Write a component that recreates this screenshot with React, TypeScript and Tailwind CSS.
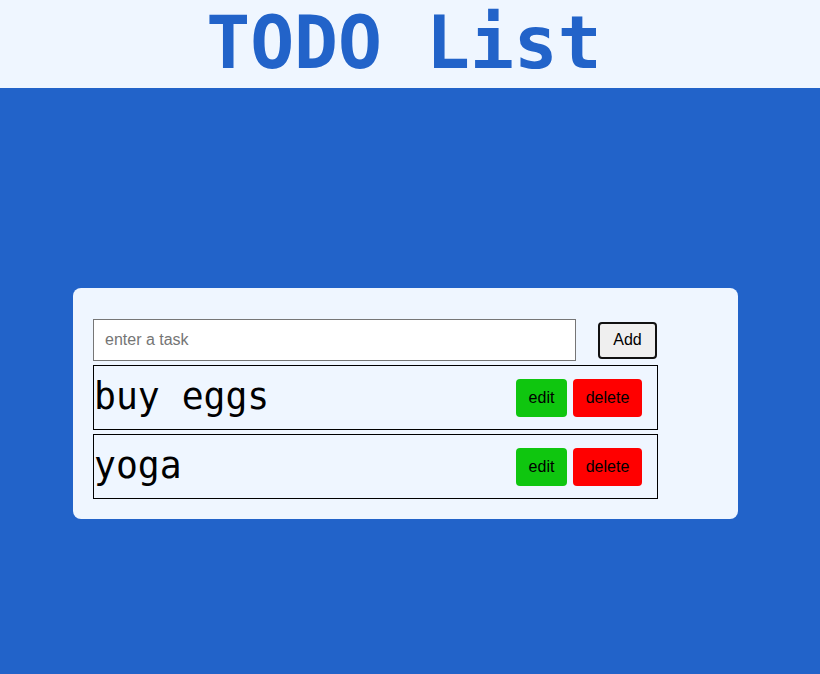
import { useState } from "react";

type Task = { id: number; text: string };

export default function App() {
  const [tasks, setTasks] = useState<Task[]>([
    { id: 1, text: "buy eggs" },
    { id: 2, text: "yoga" },
  ]);
  const [value, setValue] = useState("");

  const addTask = () => {
    if (!value.trim()) return;
    setTasks((prev) => [...prev, { id: Date.now(), text: value }]);
    setValue("");
  };

  return (
    <div className="min-h-[674px] bg-[#2263c9] font-['Liberation_Sans',Arial,sans-serif]">
      <header className="h-[88px] bg-[#eff6ff] flex items-center justify-center">
        <h1 className="font-['DejaVu_Sans_Mono',monospace] font-bold text-[73px] leading-none text-[#2263c9] ml-[-12px] mt-[-4px]">
          TODO List
        </h1>
      </header>

      <main className="pt-[200px] pl-[73px]">
        <div className="w-[665px] rounded-lg bg-[#eff6ff] pl-5 pt-[31px] pb-5">
          <div className="flex items-center w-[565px]">
            <input
              type="text"
              placeholder="enter a task"
              value={value}
              onChange={(e) => setValue(e.target.value)}
              className="w-[483px] h-[42px] border border-[#767676] bg-white pl-[11px] pr-3 text-base text-black placeholder:text-[#757575] outline-none"
            />
            <button
              onClick={addTask}
              className="ml-auto mr-[1px] w-[59px] h-[37px] border-2 border-[#111] rounded bg-[#efefef] text-base text-black"
            >
              Add
            </button>
          </div>

          <ul className="mt-[4px] flex flex-col gap-[4px] w-[565px]">
            {tasks.map((task) => (
              <li
                key={task.id}
                className="h-[65px] border border-black flex items-center pr-[15px]"
              >
                <span className="flex-1 font-['DejaVu_Sans_Mono',monospace] text-[36.4px] leading-none text-black">
                  {task.text}
                </span>
                <button className="w-[51px] h-[38px] rounded bg-[#0fc60f] text-base text-black">
                  edit
                </button>
                <button
                  onClick={() =>
                    setTasks((prev) => prev.filter((t) => t.id !== task.id))
                  }
                  className="ml-[6px] w-[69px] h-[38px] rounded bg-[#ff0000] text-base text-black"
                >
                  delete
                </button>
              </li>
            ))}
          </ul>
        </div>
      </main>
    </div>
  );
}
